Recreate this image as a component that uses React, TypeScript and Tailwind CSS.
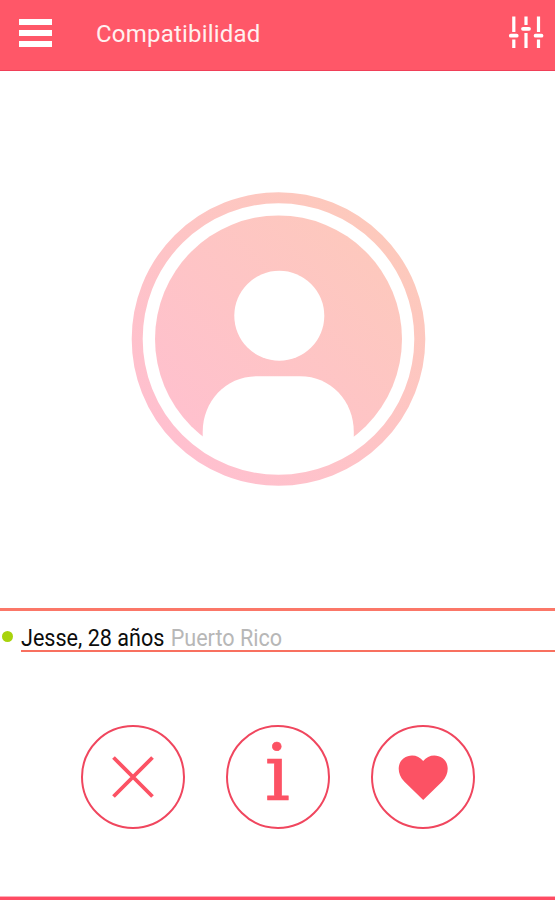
import type { ReactNode } from "react";

function Header() {
  return (
    <header className="flex h-[71px] shrink-0 items-start border-b border-[#f03f58] bg-[#ff5768] text-white">
      <button aria-label="Menú" className="mt-[19px] ml-[19px] flex w-[33px] flex-col gap-[5px]">
        <span className="h-[6px] w-full bg-white" />
        <span className="h-[6px] w-full bg-white" />
        <span className="h-[6px] w-full bg-white" />
      </button>
      <h1 className="mt-[18px] ml-[44px] text-[24px] leading-[32px] tracking-[0.2px] whitespace-nowrap text-[#fff0f0]">
        Compatibilidad
      </h1>
      <button aria-label="Filtros" className="mt-[14px] mr-[11px] ml-auto">
        <svg width="36" height="36" viewBox="508 14 36 36" stroke="#fff" fill="none" className="block">
          <path strokeWidth="3.2" d="M513.8 16.500V32M513.8 39.500V48M526 16.500V25M526 33V48M538.500 16.500V32M538.500 39.500V48" />
          <path strokeWidth="3.800" strokeLinecap="round" d="M510.800 35.700H516.700M523 28.800H529M535.600 35.700H541.500" />
        </svg>
      </button>
    </header>
  );
}

function Avatar() {
  return (
    <svg width="296" height="296" viewBox="130 191 296 296" className="block" role="img" aria-label="Foto de perfil">
      <defs>
        <linearGradient id="tint" gradientUnits="userSpaceOnUse" x1="175" y1="443" x2="382" y2="235">
          <stop offset="0" stopColor="#ffc0cf" />
          <stop offset="1" stopColor="#fdc9bc" />
        </linearGradient>
      </defs>
      <circle cx="278.500" cy="339" r="123.500" fill="url(#tint)" />
      <circle cx="279.300" cy="315.800" r="45" fill="#fff" />
      <path fill="#fff" d="M202.700 438V432C202.700 401 226 376.300 257 376.300H300C331 376.300 353.800 401 353.800 432V438L340 466H216Z" />
      <circle cx="278.500" cy="339" r="141.300" fill="none" stroke="url(#tint)" strokeWidth="11" />
    </svg>
  );
}

function RoundButton({ label, children }: { label: string; children: ReactNode }) {
  return (
    <button
      aria-label={label}
      className="flex size-[104px] items-center justify-center rounded-full border-2 border-[#f0465e] text-[#fc5264]"
    >
      {children}
    </button>
  );
}

export default function App() {
  return (
    <div className="flex h-[900px] w-[555px] flex-col overflow-hidden bg-white font-[Roboto,sans-serif]">
      <Header />
      <main className="flex h-[537px] shrink-0 justify-center pt-[120px]">
        <Avatar />
      </main>
      <section className="h-[45px] shrink-0 border-t-3 border-[#fb7768]">
        <div className="flex h-full">
          <span className="mt-[20px] ml-[2px] size-[11px] shrink-0 rounded-full bg-[#a8d30c]" />
          <div className="ml-[8px] h-[41px] flex-1 border-b-2 border-[#f8705f]">
            <p className="flex origin-left scale-x-[0.899] pt-[11px] text-[24px] leading-[32px] whitespace-nowrap">
              <span className="text-[#0c0c0c]">Jesse, 28 años</span>
              <span className="ml-[7px] text-[#b7b7b7]">Puerto Rico</span>
            </p>
          </div>
        </div>
      </section>
      <section className="flex h-[243px] shrink-0 justify-center gap-[41px] pt-[72px]">
        <RoundButton label="Descartar">
          <svg width="42" height="42" viewBox="0 0 42 42" stroke="currentColor" strokeWidth="3.800">
            <path d="M1.500 1.500L40.500 40.500M40.500 1.500L1.500 40.500" />
          </svg>
        </RoundButton>
        <RoundButton label="Información">
          <span className="-mt-[9px] font-['DejaVu_Serif',serif] text-[79px] leading-[80px] [-webkit-text-stroke:0.7px_currentColor]">i</span>
        </RoundButton>
        <RoundButton label="Me gusta">
          <svg width="50" height="46" viewBox="397.800 754.500 50 46" fill="currentColor" className="overflow-visible">
            <path d="M423 800.500L404 782C396.500 774.500 397 763.500 403.500 758.700C410 754 418.500 755.500 423 761.500C427.500 755.500 436 754 442.500 758.700C449 763.500 449.500 774.500 442 782Z" />
          </svg>
        </RoundButton>
      </section>
      <footer className="h-[4px] shrink-0 border-t border-[#ffadb8] bg-[#ff4b63]" />
    </div>
  );
}
